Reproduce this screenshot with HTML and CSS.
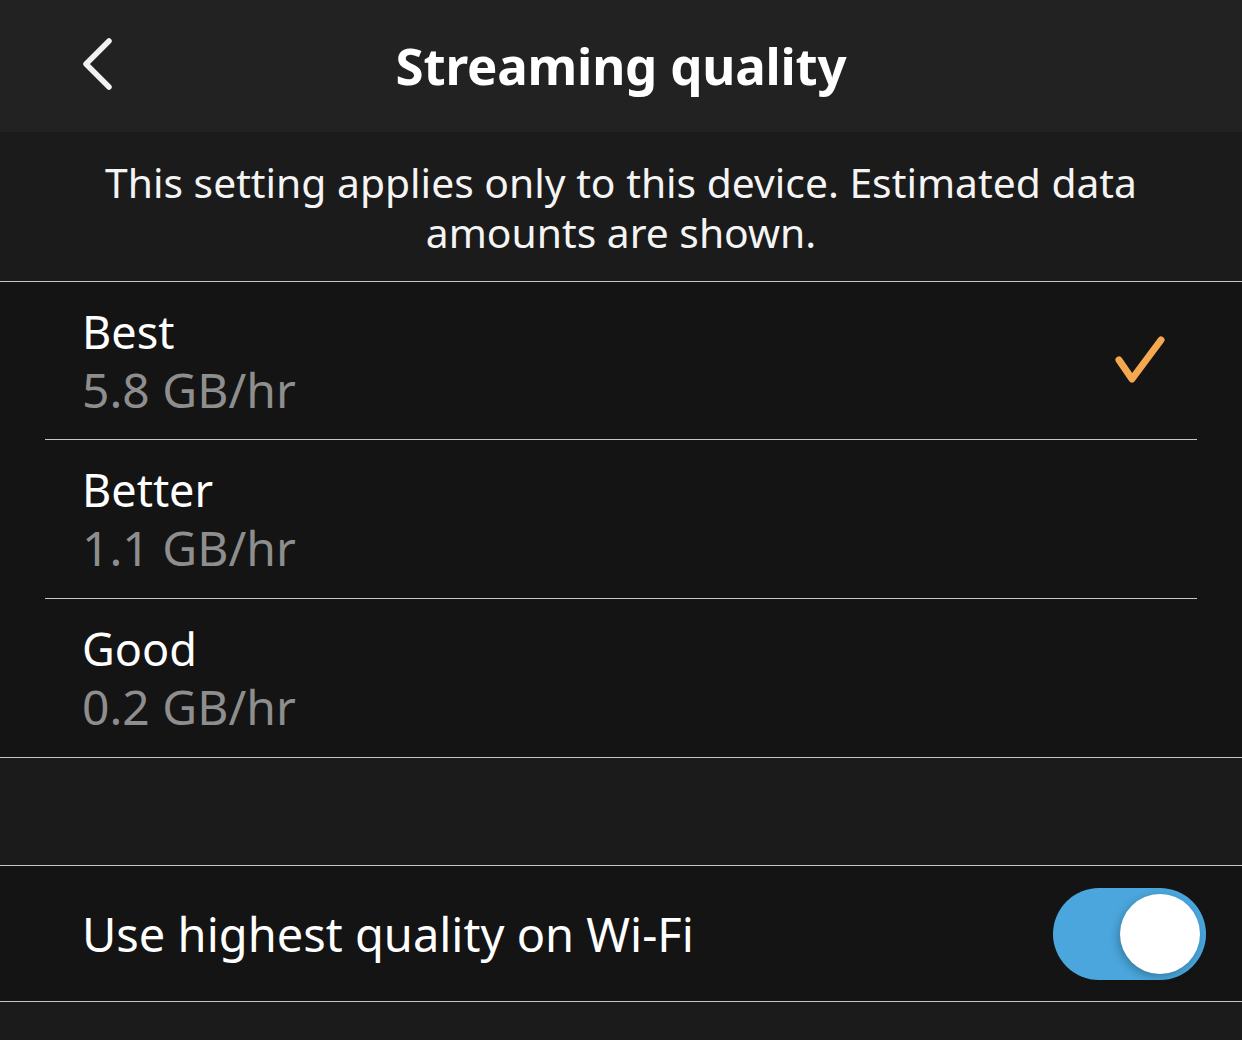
FILE: index.html
```html
<!DOCTYPE html>
<html lang="en">
  <head>
    <meta charset="UTF-8" />
    <meta name="viewport" content="width=device-width, initial-scale=1.0" />
    <title>Streaming quality</title>
    <link rel="stylesheet" href="styles.css">
  </head>
  <body>
    <header class="topbar">
      <button class="back-btn" aria-label="Back">
        <svg width="40" height="60" viewBox="0 0 40 60">
          <path d="M27 4 L4 27 L27 50" fill="none" stroke="#f2f2f2" stroke-width="5.5" stroke-linecap="round" stroke-linejoin="round" />
        </svg>
      </button>
      <h1 class="title">Streaming quality</h1>
    </header>

    <p class="notice">This setting applies only to this device. Estimated data amounts are shown.</p>

    <ul class="options">
      <li class="option">
        <div class="option-text">
          <span class="option-name">Best</span>
          <span class="option-size">5.8 GB/hr</span>
        </div>
        <svg class="check" width="54" height="52" viewBox="0 0 54 52">
          <path d="M6 25 L19 44 L48 5" fill="none" stroke="#f5a84f" stroke-width="7" stroke-linecap="round" stroke-linejoin="round" />
        </svg>
      </li>
      <li class="option">
        <div class="option-text">
          <span class="option-name">Better</span>
          <span class="option-size">1.1 GB/hr</span>
        </div>
      </li>
      <li class="option">
        <div class="option-text">
          <span class="option-name">Good</span>
          <span class="option-size">0.2 GB/hr</span>
        </div>
      </li>
    </ul>

    <div class="spacer"></div>

    <div class="toggle-row">
      <span class="toggle-label">Use highest quality on Wi-Fi</span>
      <div class="switch on"><div class="knob"></div></div>
    </div>
  </body>
</html>
```

FILE: styles.css
```css
body {
  margin: 0;
  background-color: #1b1b1b;
  color: #fff;
  font-family: "Noto Sans", "Open Sans", sans-serif;
}

.topbar {
  height: 132px;
  background-color: #222;
  display: flex;
  align-items: center;
  justify-content: center;
  position: relative;
}

.back-btn {
  position: absolute;
  left: 82px;
  top: 37px;
  background: none;
  border: none;
  padding: 0;
  cursor: pointer;
}

.title {
  margin: 0;
  font-size: 51px;
  font-weight: 700;
  letter-spacing: -0.2px;
  padding-bottom: 2px;
}

.notice {
  margin: 0;
  height: 150px;
  box-sizing: border-box;
  padding: 25px 90px 0;
  text-align: center;
  font-size: 40.8px;
  line-height: 50px;
  color: #f4f4f4;
  border-bottom: 1px solid #c6c6c6;
}

.options {
  list-style: none;
  margin: 0;
  padding: 0;
  background-color: #141414;
  border-bottom: 1px solid #c6c6c6;
}

.option {
  margin: 0 45px;
  height: 158px;
  box-sizing: border-box;
  padding: 0 30px 0 37px;
  display: flex;
  align-items: center;
  justify-content: space-between;
  border-bottom: 1px solid #c6c6c6;
}

.option:nth-child(2) {
  height: 159px;
}

.option:last-child {
  border-bottom: none;
}

.option-text {
  display: flex;
  flex-direction: column;
}

.option-name {
  font-size: 45px;
  line-height: 58px;
}

.option-size {
  font-size: 48px;
  line-height: 58px;
  color: #8e8e8e;
}

.spacer {
  height: 108px;
  box-sizing: border-box;
  border-bottom: 1px solid #c6c6c6;
}

.toggle-row {
  height: 136px;
  box-sizing: border-box;
  background-color: #141414;
  border-bottom: 1px solid #c6c6c6;
  display: flex;
  align-items: center;
  justify-content: space-between;
  padding: 0 36px 0 82px;
}

.toggle-label {
  font-size: 47px;
}

.switch {
  width: 153px;
  height: 92px;
  border-radius: 46px;
  background-color: #4aa6dc;
  position: relative;
}

.knob {
  position: absolute;
  top: 6px;
  right: 6px;
  width: 80px;
  height: 80px;
  border-radius: 50%;
  background-color: #fff;
  box-shadow: -2px 3px 8px rgba(0, 0, 0, 0.25);
}
```
